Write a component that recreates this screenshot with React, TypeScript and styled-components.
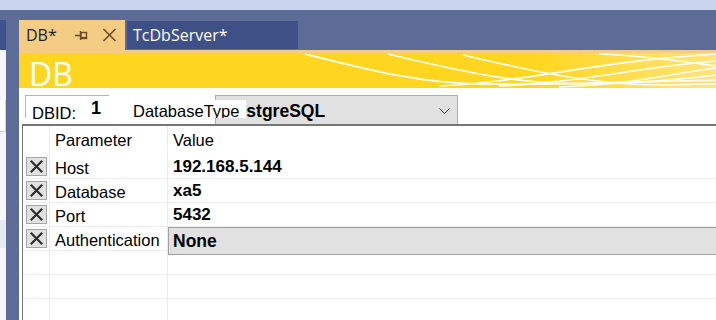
import { Fragment } from 'react'
import styled, { createGlobalStyle } from 'styled-components'

const GlobalStyle = createGlobalStyle`
  html, body {
    margin: 0;
    padding: 0;
  }
  body {
    width: 716px;
    height: 320px;
    overflow: hidden;
    background: #5d6b97;
  }
`

const Window = styled.div`
  width: 716px;
  height: 320px;
  overflow: hidden;
  display: flex;
  flex-direction: column;
  background: #5d6b97;
`

const TitleStrip = styled.div`
  flex: none;
  height: 10px;
  background: #c9d5ee;
`

const Dock = styled.div`
  flex: 1;
  min-height: 0;
  display: flex;
`

const SidePane = styled.div`
  flex: none;
  width: 6px;
  margin-top: 10px;
  display: flex;
  flex-direction: column;
`

const SideBlock = styled.div<{ $h?: number; $bg: string; $edge?: boolean }>`
  flex: ${(p) => (p.$h ? 'none' : '1')};
  height: ${(p) => (p.$h ? `${p.$h}px` : 'auto')};
  background: ${(p) => p.$bg};
  box-sizing: border-box;
  border-right: ${(p) => (p.$edge ? '1px solid #cdd1dc' : 'none')};
  border-bottom: ${(p) => (p.$edge ? '1px solid #cdd1dc' : 'none')};
`

const DocPane = styled.div`
  flex: 1;
  min-width: 0;
  margin-left: 13px;
  margin-top: 10px;
  display: flex;
  flex-direction: column;
`

const TabStrip = styled.div`
  flex: none;
  height: 30px;
  display: flex;
  align-items: flex-start;
  gap: 2px;
`

const Tab = styled.div<{ $active?: boolean }>`
  box-sizing: border-box;
  display: flex;
  align-items: center;
  height: ${(p) => (p.$active ? '30px' : '28px')};
  margin-top: ${(p) => (p.$active ? '0' : '1px')};
  width: ${(p) => (p.$active ? '106px' : '171px')};
  padding-left: ${(p) => (p.$active ? '7px' : '6px')};
  background: ${(p) => (p.$active ? '#f5cc84' : '#3e5085')};
  color: ${(p) => (p.$active ? '#1e1e1e' : '#ffffff')};
  font-family: 'Open Sans', 'Noto Sans', sans-serif;
  font-size: 16px;
  line-height: 20px;
`

const TabIcon = styled.span<{ $gap: number }>`
  display: flex;
  margin-left: ${(p) => p.$gap}px;
`

const Accent = styled.div`
  flex: none;
  height: 3px;
  background: #f5cc84;
`

const Banner = styled.div`
  flex: none;
  position: relative;
  height: 35px;
  overflow: hidden;
  background: linear-gradient(90deg, #ffd61f 0%, #ffd61f 74%, #ffe47c 100%);
`

const Waves = styled.svg`
  position: absolute;
  left: 0;
  top: 0;
`

const BannerTitle = styled.div`
  position: relative;
  padding: 5px 0 0 10px;
  color: #ffffff;
  font-family: 'Open Sans', 'Noto Sans', sans-serif;
  font-size: 32px;
  line-height: 32px;
`

const Content = styled.div`
  flex: 1;
  min-height: 0;
  display: flex;
  flex-direction: column;
  background: #ffffff;
  font-family: 'Liberation Sans', Arial, sans-serif;
  color: #000000;
`

const ToolRow = styled.div`
  flex: none;
  box-sizing: border-box;
  height: 36px;
  padding: 7px 0 0 6px;
  display: flex;
  align-items: flex-start;
`

const IdBox = styled.div`
  box-sizing: border-box;
  width: 84px;
  height: 23px;
  border-top: 1px solid #b4b4b4;
  border-left: 1px solid #b4b4b4;
  display: flex;
  align-items: flex-start;
`

const IdLabel = styled.span`
  padding: 8px 0 0 6px;
  font-size: 16.5px;
  line-height: 18px;
`

const IdValue = styled.span`
  margin-left: 15px;
  padding-top: 2px;
  font-size: 18px;
  line-height: 20px;
  font-weight: bold;
`

const TypeLabel = styled.span`
  position: relative;
  z-index: 1;
  box-sizing: border-box;
  width: 113px;
  height: 18px;
  margin: 5px -31px 0 24px;
  background: #ffffff;
  font-size: 16.5px;
  line-height: 22px;
  white-space: nowrap;
  overflow: hidden;
`

const TypeCombo = styled.div`
  box-sizing: border-box;
  width: 243px;
  height: 29px;
  padding: 5px 7px 0 8px;
  border: 1px solid #adadad;
  border-bottom: none;
  background: #e1e1e1;
  display: flex;
  justify-content: space-between;
  align-items: flex-start;
`

const ComboText = styled.span`
  font-size: 17.5px;
  line-height: 20px;
  font-weight: bold;
`

const Chevron = styled.svg`
  margin-top: 7px;
`

const Grid = styled.div`
  flex: 1;
  min-height: 0;
  margin-left: 3px;
  border-top: 2px solid #767676;
  border-left: 1px solid #767676;
  display: grid;
  grid-template-columns: 27px 118px 1fr;
  grid-template-rows: 29px repeat(7, 24px);
  align-content: start;
  overflow: hidden;
`

const HeadCell = styled.div<{ $last?: boolean }>`
  box-sizing: border-box;
  padding-left: 5px;
  border-right: ${(p) => (p.$last ? 'none' : '1px solid #ebebeb')};
  font-size: 16.5px;
  line-height: 29px;
  white-space: nowrap;
`

const RowHead = styled.div`
  box-sizing: border-box;
  padding: 2px 0 0 3px;
  border-right: 1px solid #ebebeb;
  border-bottom: 1px solid #ececec;
`

const DeleteButton = styled.div`
  box-sizing: border-box;
  width: 21px;
  height: 19px;
  border: 1px solid #a6a6a6;
  background: #e1e1e1;
  display: flex;
  align-items: center;
  justify-content: center;
`

const NameCell = styled.div`
  box-sizing: border-box;
  padding: 2px 0 0 5px;
  border-right: 1px solid #ebebeb;
  border-bottom: 1px solid #ececec;
  font-size: 16.5px;
  line-height: 22px;
  white-space: nowrap;
`

const ValueCell = styled.div`
  position: relative;
  box-sizing: border-box;
  padding: 1px 0 0 5px;
  border-bottom: 1px solid #ececec;
  font-size: 17px;
  line-height: 22px;
  font-weight: bold;
  white-space: nowrap;
`

const CellCombo = styled.div`
  position: absolute;
  z-index: 1;
  left: 0;
  top: 0;
  right: 0;
  height: 28px;
  box-sizing: border-box;
  padding-left: 4px;
  border-top: 1px solid #a0a0a0;
  border-left: 1px solid #a0a0a0;
  border-bottom: 1px solid #a0a0a0;
  background: #e1e1e1;
  font-size: 17.5px;
  line-height: 27px;
`

interface Param {
  name: string
  value: string
  combo?: boolean
}

const params: Param[] = [
  { name: 'Host', value: '192.168.5.144' },
  { name: 'Database', value: 'xa5' },
  { name: 'Port', value: '5432' },
  { name: 'Authentication', value: 'None', combo: true },
]

const CrossIcon = () => (
  <svg width="13" height="13" viewBox="0 0 13 13">
    <path d="M1.5 1.5L11.5 11.5M11.5 1.5L1.5 11.5" stroke="#2b2b2b" strokeWidth="2.1" strokeLinecap="square" />
  </svg>
)

const PinIcon = () => (
  <svg width="13" height="11" viewBox="0 0 13 11">
    <path d="M0 5.5H5.5M5.5 1V10" stroke="#6c4a22" strokeWidth="1.4" fill="none" />
    <rect x="6" y="2.5" width="5.5" height="6" fill="none" stroke="#6c4a22" strokeWidth="1.4" />
    <path d="M6.5 7.5H11" stroke="#6c4a22" strokeWidth="1.2" />
  </svg>
)

const CloseIcon = () => (
  <svg width="15" height="14" viewBox="0 0 15 14">
    <path d="M1.5 1L13.5 13M13.5 1L1.5 13" stroke="#6a4c2b" strokeWidth="1.6" />
  </svg>
)

const WAVES = [
  'M286 1 C350 17 400 30 460 31 C530 32 610 29 697 27',
  'M369 1 C440 18 500 31 560 31 C620 31 660 26 697 22',
  'M444 2 C520 20 580 32 640 32 C670 32 690 31 697 31',
  'M420 33 C500 30 580 8 697 1',
  'M480 33 C560 30 620 14 697 8',
  'M540 34 C610 32 650 21 697 15',
  'M580 1 C630 3 670 9 697 13',
]

const App = () => {
  const emptyRows = [0, 1, 2]

  return (
    <Window>
      <GlobalStyle />
      <TitleStrip />
      <Dock>
        <SidePane>
          <SideBlock $h={30} $bg="#3e5389" />
          <SideBlock $h={50} $bg="#f5f7fc" />
          <SideBlock $h={32} $bg="#ffffff" $edge />
          <SideBlock $h={88} $bg="#f5f7fc" />
          <SideBlock $h={28} $bg="#e7eaf3" />
          <SideBlock $bg="#f5f7fc" />
        </SidePane>
        <DocPane>
          <TabStrip>
            <Tab $active>
              DB*
              <TabIcon $gap={18}>
                <PinIcon />
              </TabIcon>
              <TabIcon $gap={14}>
                <CloseIcon />
              </TabIcon>
            </Tab>
            <Tab>TcDbServer*</Tab>
          </TabStrip>
          <Accent />
          <Banner>
            <Waves width="697" height="35" viewBox="0 0 697 35">
              {WAVES.map((d) => (
                <path key={d} d={d} fill="none" stroke="#ffffff" strokeWidth="1.7" opacity="0.95" />
              ))}
            </Waves>
            <BannerTitle>DB</BannerTitle>
          </Banner>
          <Content>
            <ToolRow>
              <IdBox>
                <IdLabel>DBID:</IdLabel>
                <IdValue>1</IdValue>
              </IdBox>
              <TypeLabel>DatabaseType</TypeLabel>
              <TypeCombo>
                <ComboText>PostgreSQL</ComboText>
                <Chevron width="11" height="6" viewBox="0 0 11 6">
                  <path d="M0.5 0.5L5.5 5.5L10.5 0.5" fill="none" stroke="#444444" strokeWidth="1" />
                </Chevron>
              </TypeCombo>
            </ToolRow>
            <Grid>
              <HeadCell />
              <HeadCell>Parameter</HeadCell>
              <HeadCell $last>Value</HeadCell>
              {params.map((p) => (
                <Fragment key={p.name}>
                  <RowHead>
                    <DeleteButton>
                      <CrossIcon />
                    </DeleteButton>
                  </RowHead>
                  <NameCell>{p.name}</NameCell>
                  <ValueCell>{p.combo ? <CellCombo>{p.value}</CellCombo> : p.value}</ValueCell>
                </Fragment>
              ))}
              {emptyRows.map((i) => (
                <Fragment key={`empty-${i}`}>
                  <RowHead />
                  <NameCell />
                  <ValueCell />
                </Fragment>
              ))}
            </Grid>
          </Content>
        </DocPane>
      </Dock>
    </Window>
  )
}

export default App
